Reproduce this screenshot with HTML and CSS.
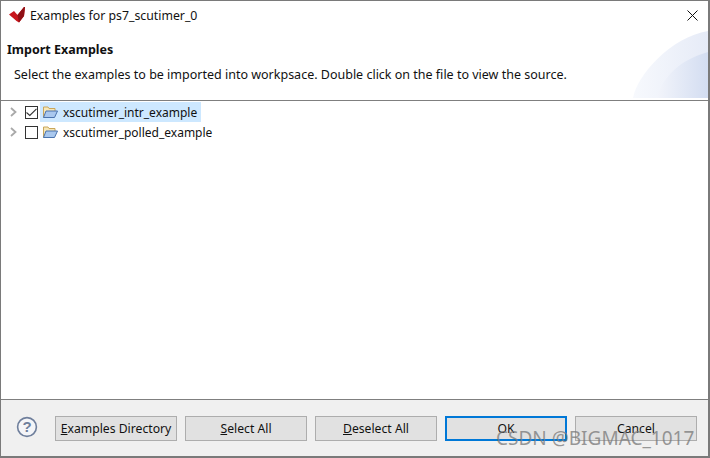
FILE: index.html
```html
<!DOCTYPE html>
<html lang="en">
<head>
    <meta charset="UTF-8">
    <meta name="viewport" content="width=device-width, initial-scale=1.0">
    <title>Examples for ps7_scutimer_0</title>
    <link rel="stylesheet" href="styles.css">
</head>
<body>

<div class="dialog">
    <div class="title-bar">
        <svg class="app-logo" width="20" height="16" viewBox="0 0 20 16">
            <path d="M0 7.5 L5 4 L8.5 8 L15 0 L16 0 L15 9 L10 15.5 L7.5 14 Z" fill="#c8161d"/>
            <path d="M8.5 8 L15 0 L16 0 L15 9 L10 15.5 Z" fill="#8f0f14"/>
        </svg>
        <span class="title-text">Examples for ps7_scutimer_0</span>
        <svg class="close-icon" width="11" height="11" viewBox="0 0 11 11">
            <path d="M0.5 0.5 L10.5 10.5 M10.5 0.5 L0.5 10.5" stroke="#111" stroke-width="1" fill="none"/>
        </svg>
    </div>

    <div class="header">
        <svg class="header-art" width="75" height="67" viewBox="0 0 75 67">
            <defs>
                <linearGradient id="artFade" x1="0" y1="0" x2="1" y2="0">
                    <stop offset="0" stop-color="#f7f9fd"/>
                    <stop offset="1" stop-color="#e6ebf7"/>
                </linearGradient>
                <linearGradient id="artFadeInner" x1="0" y1="0" x2="1" y2="0">
                    <stop offset="0" stop-color="#f3f5fb"/>
                    <stop offset="1" stop-color="#d3ddf1"/>
                </linearGradient>
            </defs>
            <path d="M0 67 C4 44 38 6 75 0 L75 67 Z" fill="url(#artFade)"/>
            <path d="M23 67 C32 42 50 28 75 21 L75 67 Z" fill="url(#artFadeInner)"/>
        </svg>
        <h1 class="header-title">Import Examples</h1>
        <p class="header-desc">Select the examples to be imported into workpsace. Double click on the file to view the source.</p>
    </div>

    <div class="tree">
        <div class="tree-row">
            <svg class="arrow" width="7" height="10" viewBox="0 0 7 10"><path d="M1 1 L5.5 5 L1 9" stroke="#a9a9a9" stroke-width="1.8" fill="none"/></svg>
            <span class="checkbox">
                <svg width="11" height="9" viewBox="0 0 11 9"><path d="M0.5 4.5 L3.8 7.5 L10.5 0.8" stroke="#333" stroke-width="1.1" fill="none"/></svg>
            </span>
            <span class="tree-item selected">
                <svg class="folder" width="16" height="14" viewBox="0 0 16 14">
                    <path d="M1.5 12.5 L1.5 2 L6 2 L7 3.5 L13 3.5 L13 6" fill="#f6e7b8" stroke="#c9a65a"/>
                    <path d="M1.5 12.5 L4 6 L15.5 6 L12.5 12.5 Z" fill="#a9c8ee" stroke="#4a73ad"/>
                </svg>
                <span>xscutimer_intr_example</span>
            </span>
        </div>
        <div class="tree-row">
            <svg class="arrow" width="7" height="10" viewBox="0 0 7 10"><path d="M1 1 L5.5 5 L1 9" stroke="#a9a9a9" stroke-width="1.8" fill="none"/></svg>
            <span class="checkbox"></span>
            <span class="tree-item">
                <svg class="folder" width="16" height="14" viewBox="0 0 16 14">
                    <path d="M1.5 12.5 L1.5 2 L6 2 L7 3.5 L13 3.5 L13 6" fill="#f6e7b8" stroke="#c9a65a"/>
                    <path d="M1.5 12.5 L4 6 L15.5 6 L12.5 12.5 Z" fill="#a9c8ee" stroke="#4a73ad"/>
                </svg>
                <span>xscutimer_polled_example</span>
            </span>
        </div>
    </div>

    <div class="footer">
        <svg class="help-icon" width="22" height="22" viewBox="0 0 22 22">
            <circle cx="11" cy="11" r="9.4" fill="#f4f5f8" stroke="#6f7f9c" stroke-width="1.6"/>
            <text x="11" y="16" text-anchor="middle" class="help-mark">?</text>
        </svg>
        <div class="buttons">
            <button class="btn"><u>E</u>xamples Directory</button>
            <button class="btn"><u>S</u>elect All</button>
            <button class="btn"><u>D</u>eselect All</button>
            <button class="btn btn-default">OK</button>
            <button class="btn">Cancel</button>
        </div>
    </div>

    <div class="watermark">CSDN @BIGMAC_1017</div>
</div>

</body>
</html>
```

FILE: styles.css
```css
body {
    margin: 0;
    font-family: "Noto Sans", "Open Sans", sans-serif;
    font-size: 12px;
    color: #111;
    background: #fff;
}
.dialog {
    position: relative;
    box-sizing: border-box;
    width: 710px;
    height: 458px;
    display: flex;
    flex-direction: column;
    border: 1px solid #7a7a7a;
    border-right-width: 2px;
    border-bottom-width: 2px;
    overflow: hidden;
}
.title-bar {
    box-sizing: border-box;
    height: 30px;
    flex: none;
    display: flex;
    align-items: center;
    padding: 0 10px 2px 8px;
    background: #fff;
}
.app-logo {
    margin-right: 1px;
}
.title-text {
    flex: 1;
    font-size: 12.3px;
}
.header {
    position: relative;
    height: 69px;
    flex: none;
    background: #fff;
}
.header-art {
    position: absolute;
    right: 0;
    top: 0;
}
.header-title {
    position: relative;
    margin: 10px 0 0 6px;
    font-size: 12.5px;
    line-height: 17px;
    font-weight: 700;
}
.header-desc {
    position: relative;
    margin: 8px 0 0 13px;
    font-size: 12.5px;
    line-height: 17px;
}
.tree {
    flex: 1;
    background: #fff;
    border-top: 1px solid #7f7f7f;
    border-bottom: 1px solid #7f7f7f;
    padding-top: 1px;
}
.tree-row {
    height: 20px;
    display: flex;
    align-items: center;
    padding-left: 9px;
}
.arrow {
    margin-right: 8px;
}
.checkbox {
    box-sizing: border-box;
    width: 13px;
    height: 13px;
    display: flex;
    align-items: center;
    justify-content: center;
    border: 1px solid #333;
    background: #fff;
    margin-right: 2px;
}
.tree-item {
    height: 20px;
    display: flex;
    align-items: center;
    gap: 5px;
    padding: 0 4px 0 2px;
    font-size: 12px;
}
.tree-item.selected {
    background: #cde8ff;
}
.footer {
    height: 56px;
    flex: none;
    display: flex;
    align-items: center;
    background: #f0f0f0;
    padding: 0 11px 0 15px;
}
.help-icon {
    margin: 0 17px 2px 0;
}
.help-mark {
    font-family: "Liberation Sans", sans-serif;
    font-size: 15px;
    font-weight: 700;
    fill: #6f7f9c;
}
.buttons {
    display: flex;
    gap: 8px;
}
.btn {
    box-sizing: border-box;
    width: 122px;
    height: 25px;
    padding: 0;
    border: 1px solid #adadad;
    background: #e1e1e1;
    font-family: inherit;
    font-size: 12.2px;
    color: #111;
}
.btn-default {
    border: 2px solid #0078d7;
}
.watermark {
    position: absolute;
    left: 495px;
    top: 426px;
    font-size: 19px;
    line-height: 22px;
    white-space: nowrap;
    color: rgba(120, 120, 120, 0.75);
}
```
